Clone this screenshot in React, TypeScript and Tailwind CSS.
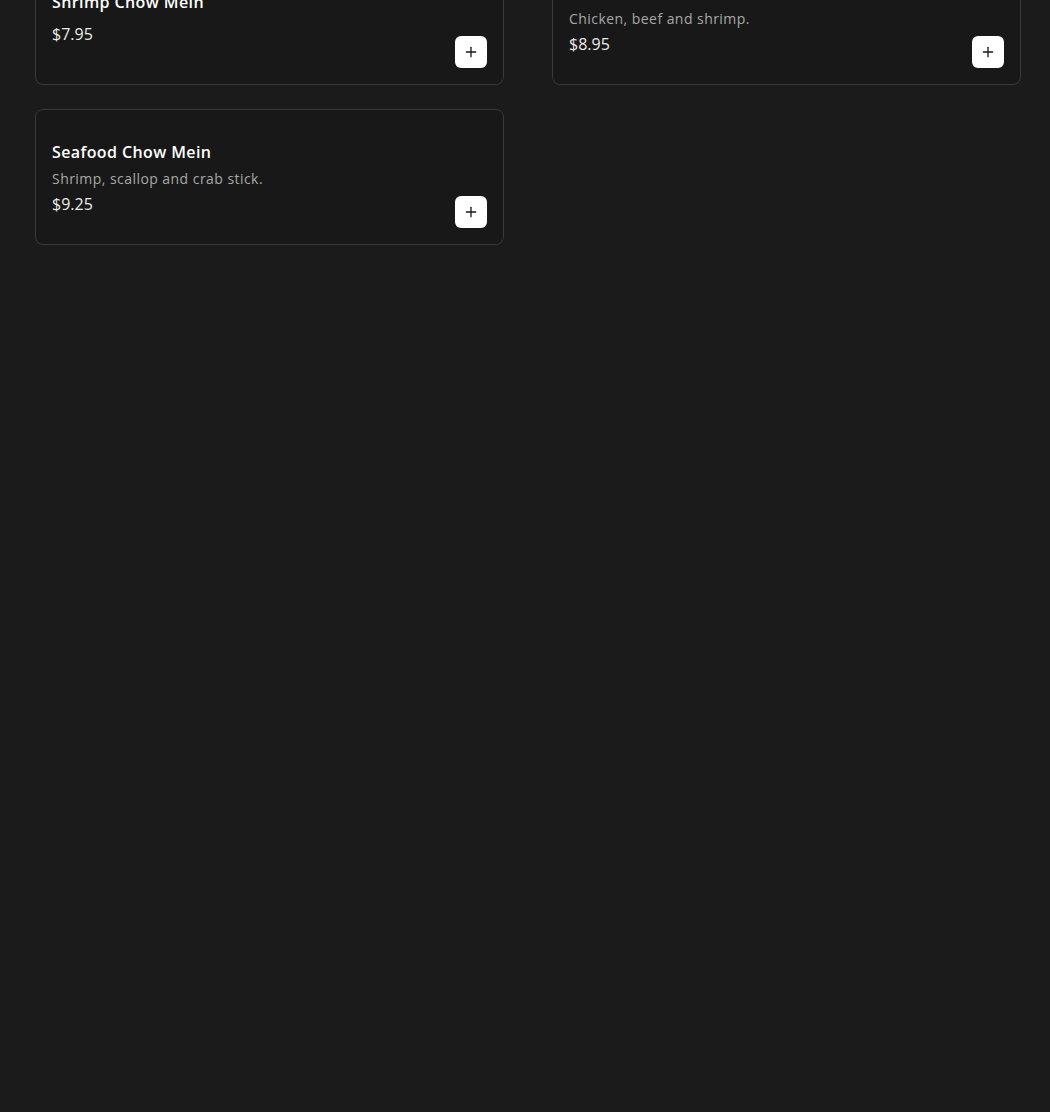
import { Plus } from 'lucide-react'

type Item = { name: string; desc?: string; price: string }

const items: Item[] = [
  { name: 'Shrimp Chow Mein', price: '$7.95' },
  { name: 'Combination Chow Mein', desc: 'Chicken, beef and shrimp.', price: '$8.95' },
  { name: 'Seafood Chow Mein', desc: 'Shrimp, scallop and crab stick.', price: '$9.25' },
]

function MenuCard({ item }: { item: Item }) {
  return (
    <div className="h-[136px] flex items-center justify-between p-4 rounded-lg border border-[#3a3a3a] bg-[#181818]">
      <div className="flex flex-col pt-[1px]">
        <h3 className="text-base leading-6 font-semibold tracking-[0.4px] text-white">{item.name}</h3>
        <p className="text-sm leading-5 tracking-[0.45px] text-[#a8a8a8] mt-[5px] mb-[3px]">{item.desc}</p>
        <span className="text-base leading-6 text-[#ececec]">{item.price}</span>
      </div>
      <button className="self-end w-8 h-8 flex items-center justify-center rounded-md bg-white text-[#1a1a1a]">
        <Plus size={16} strokeWidth={2} />
      </button>
    </div>
  )
}

export default function App() {
  return (
    <div
      className="min-h-[1112px] bg-[#1b1b1b] overflow-hidden"
      style={{ fontFamily: '"Open Sans", "Liberation Sans", sans-serif' }}
    >
      <div className="-mt-[51px] pl-[35px] grid grid-cols-[469px_469px] gap-x-12 gap-y-6">
        {items.map((item) => (
          <MenuCard key={item.name} item={item} />
        ))}
      </div>
    </div>
  )
}
